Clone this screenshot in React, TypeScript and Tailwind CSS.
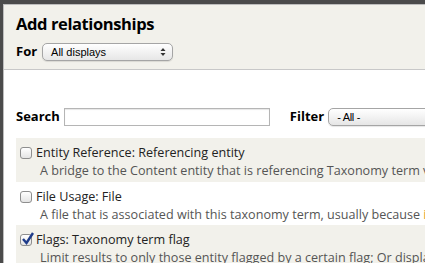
import React from "react";

function Select({ label, w, small }: { label: string; w: string; small?: boolean }) {
  return (
    <div
      className={`${w} shrink-0 h-[18px] rounded-[5px] border border-[#a5a5a5] bg-gradient-to-b from-[#ffffff] to-[#e6e6e6] flex items-center justify-between pl-[8px] pr-[6px] text-[11px] text-black shadow-[0_1px_1px_rgba(0,0,0,0.1)]`}
      style={{ fontFamily: '"Liberation Sans", Arial, sans-serif' }}
    >
      <span className={small ? "tracking-[-0.3px]" : ""}>{label}</span>
      {!small && (
        <svg width="6" height="10" viewBox="0 0 6 10">
          <path d="M0.5 4 L3 1 L5.5 4 Z" fill="#333" />
          <path d="M0.5 6 L3 9 L5.5 6 Z" fill="#333" />
        </svg>
      )}
    </div>
  );
}

function Check({ checked }: { checked?: boolean }) {
  return (
    <div className="relative w-[12px] h-[12px] rounded-[3px] border border-[#8e8e8e] bg-gradient-to-b from-white to-[#e4e4e4] shrink-0">
      {checked && (
        <svg className="absolute left-[0px] top-[-3px]" width="14" height="14" viewBox="0 0 14 14">
          <path d="M2 7 L5.5 11 L12 1" stroke="#1f3c8a" strokeWidth="2.4" fill="none" />
        </svg>
      )}
    </div>
  );
}

function Row({ title, desc, bg, checked, h }: { title: string; desc: React.ReactNode; bg: string; checked?: boolean; h: string }) {
  return (
    <div className={`${bg} pl-[4px] pt-[7px] ${h}`}>
      <div className="flex items-center gap-[4px] h-[16px]">
        <Check checked={checked} />
        <span className="text-[12.6px] text-[#222] whitespace-nowrap">{title}</span>
      </div>
      <div className="pl-[20px] text-[12.6px] text-[#555] whitespace-nowrap leading-[17px] mt-[1px]">{desc}</div>
    </div>
  );
}

export default function App() {
  return (
    <div
      className="w-[425px] h-[263px] overflow-hidden bg-[#4b4b4b] pt-[4px] pl-[3px]"
      style={{ fontFamily: '"Open Sans", "Noto Sans", sans-serif' }}
    >
      <div className="h-full bg-white border-t border-l border-[#bdbdbd] overflow-hidden">
        <div className="h-[65px] bg-[#f2f1eb] border-b border-[#c8c8c8] pl-[12px] pt-[7px]">
          <div className="text-[16.5px] font-bold text-black leading-[24px] tracking-[-0.4px]">Add relationships</div>
          <div className="flex items-center gap-[5px] mt-[6px]">
            <span className="text-[13px] font-bold text-black">For</span>
            <Select label="All displays" w="w-[131px]" />
          </div>
        </div>
        <div className="pl-[12px] pt-[38px]">
          <div className="flex items-center h-[18px]">
            <span className="text-[13px] font-bold text-black shrink-0">Search</span>
            <div className="ml-[4px] shrink-0 w-[206px] h-[18px] border border-[#b5b5b5] bg-white shadow-[inset_0_1px_1px_rgba(0,0,0,0.1)]" />
            <span className="ml-[20px] text-[13px] font-bold text-black shrink-0">Filter</span>
            <div className="ml-[4px] shrink-0">
              <Select label="- All -" w="w-[120px]" small />
            </div>
          </div>
          <div className="mt-[12px]">
            <Row
              h="h-[44px]"
              bg="bg-[#f2f1eb]"
              title="Entity Reference: Referencing entity"
              desc="A bridge to the Content entity that is referencing Taxonomy term via field_tags"
            />
            <Row
              h="h-[43px]"
              bg="bg-white"
              title="File Usage: File"
              desc={
                <>
                  A file that is associated with this taxonomy term, usually because <span className="text-[#e0a030]">it</span>
                </>
              }
            />
            <Row
              h="h-[44px]"
              bg="bg-[#f2f1eb]"
              checked
              title="Flags: Taxonomy term flag"
              desc="Limit results to only those entity flagged by a certain flag; Or display"
            />
          </div>
        </div>
      </div>
    </div>
  );
}
